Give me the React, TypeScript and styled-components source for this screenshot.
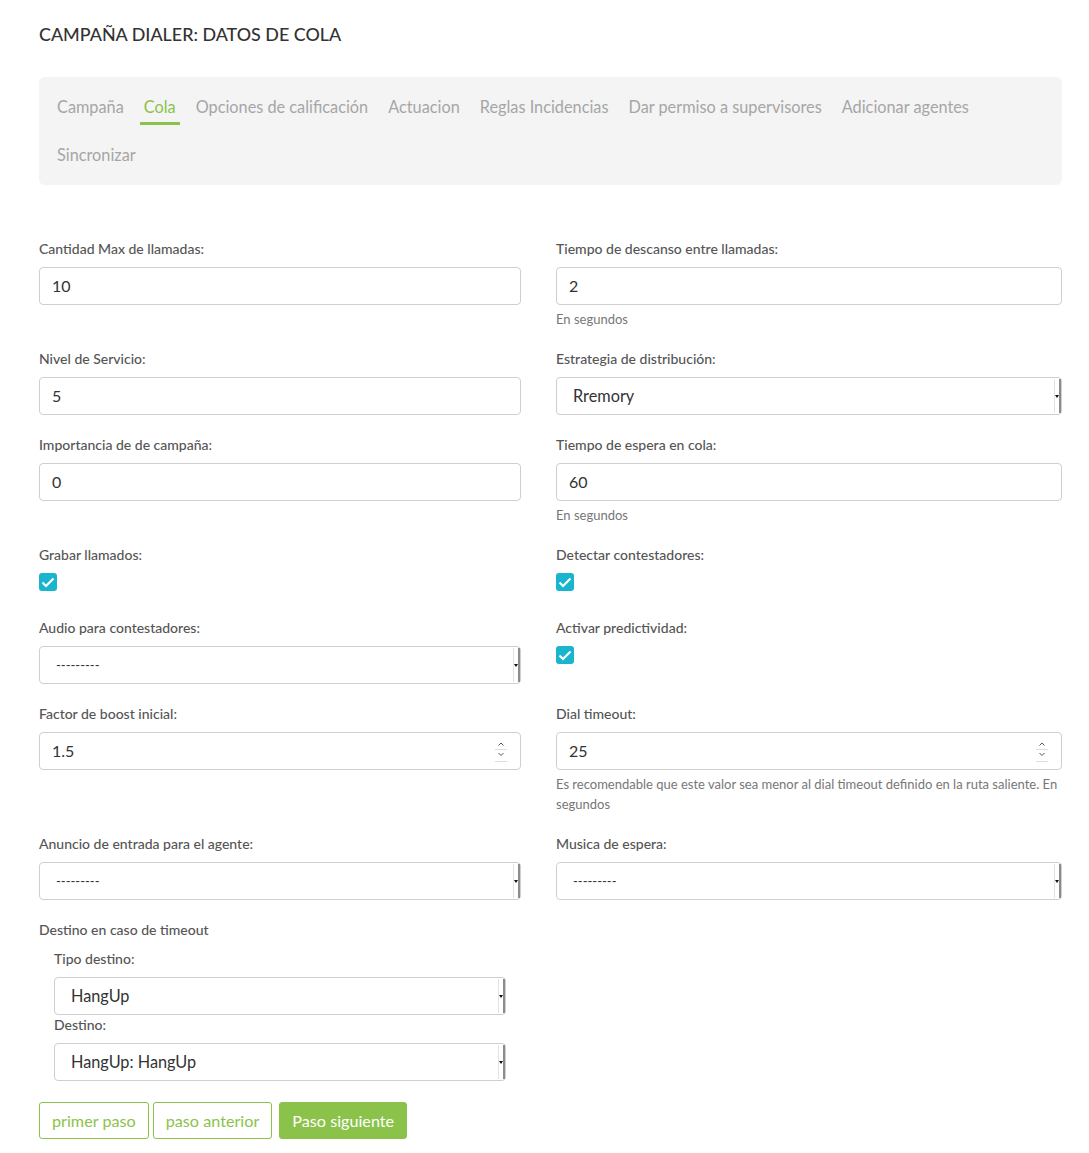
import React from 'react'
import styled, { createGlobalStyle } from 'styled-components'

const GlobalStyle = createGlobalStyle`
  body {
    margin: 0;
    background: #fff;
    font-family: Lato, 'Open Sans', sans-serif;
    color: #333;
  }
`

const Page = styled.div`
  padding: 21px 27px 20px 39px;
`

const Title = styled.h1`
  margin: 0;
  font-size: 17.9px;
  line-height: 26px;
  font-weight: 500;
  color: #333;
`

const TabPanel = styled.nav`
  margin-top: 30px;
  background: #f4f4f4;
  border-radius: 6px;
  padding: 6px 14px;
  display: flex;
  flex-wrap: wrap;
`

const Tab = styled.div<{ $active?: boolean }>`
  height: 48px;
  margin-right: 12px;
  padding: 0 4px;
  box-sizing: border-box;
  display: flex;
  flex-direction: column;
  align-items: center;
  font-size: 16.3px;
  color: ${(p) => (p.$active ? '#8bc34a' : '#a6a6a6')};

  span {
    display: block;
    padding: 12px 4px 3px;
    line-height: 24px;
    margin: 0 -4px;
    border-bottom: 3px solid ${(p) => (p.$active ? '#8bc34a' : 'transparent')};
  }
`

const Form = styled.div`
  margin-top: 54px;
  display: grid;
  grid-template-columns: 482px 506px;
  column-gap: 35px;
  row-gap: 20px;
  align-items: start;
`

const Field = styled.div``

const Label = styled.div`
  font-size: 14px;
  line-height: 20px;
  font-weight: 500;
  color: #555;
`

const Box = styled.div`
  margin-top: 8px;
  height: 38px;
  box-sizing: border-box;
  border: 1px solid #cfcfcf;
  border-radius: 4px;
  background: #fff;
  display: flex;
  align-items: center;
  padding-left: 12px;
  padding-right: 13px;
  font-size: 16px;
  color: #333;
`

const SelectBox = styled(Box)<{ $empty?: boolean }>`
  padding-left: 16px;
  padding-right: 0;
  font-size: ${(p) => (p.$empty ? '13px' : '16.3px')};
`

const Value = styled.span`
  flex: 1;
  margin-top: -1px;
`

const ArrowBox = styled.div`
  width: 7px;
  height: 34px;
  box-sizing: border-box;
  border-left: 1px solid #e2e2e2;
  border-right: 2px solid #8c8c8c;
  display: flex;
  align-items: center;
  justify-content: center;

  &::before {
    content: '';
    border-left: 2.5px solid transparent;
    border-right: 2.5px solid transparent;
    border-top: 3px solid #111;
  }
`

const Help = styled.div`
  margin-top: 4px;
  font-size: 13px;
  line-height: 20px;
  color: #777;
`

const CheckRow = styled.div`
  margin-top: 8px;
  height: 25px;
`

const Check = styled.span`
  display: flex;
  width: 18px;
  height: 18px;
  border-radius: 3px;
  background: #19b5cf;
  align-items: center;
  justify-content: center;
`

const SubGroup = styled.div`
  padding: 0 15px;
  margin-top: 9px;
`

const Actions = styled.div`
  margin-top: 21px;
  display: flex;
  gap: 4px;
`

const Button = styled.button<{ $primary?: boolean }>`
  height: 37px;
  padding: 0 12px;
  border-radius: 3px;
  border: 1px solid #8bc34a;
  background: ${(p) => (p.$primary ? '#8bc34a' : '#fff')};
  color: ${(p) => (p.$primary ? '#fff' : '#8bc34a')};
  font-family: inherit;
  font-size: 16.2px;
  margin-left: ${(p) => (p.$primary ? '3px' : '0')};
`

const tabs = [
  'Campaña',
  'Cola',
  'Opciones de calificación',
  'Actuacion',
  'Reglas Incidencias',
  'Dar permiso a supervisores',
  'Adicionar agentes',
  'Sincronizar',
]

const Spinner = () => (
  <svg width="12" height="26" viewBox="0 0 12 26" fill="none">
    <path d="M3.5 7.5 L6 5 L8.5 7.5" stroke="#555" strokeWidth="1" />
    <line x1="0" y1="11.5" x2="12" y2="11.5" stroke="#ddd" />
    <path d="M3.5 15 L6 17.5 L8.5 15" stroke="#555" strokeWidth="1" />
    <line x1="0" y1="23.5" x2="12" y2="23.5" stroke="#ddd" />
  </svg>
)

const CheckMark = () => (
  <svg width="14" height="11" viewBox="0 0 14 11">
    <path d="M1.5 5.5 L5 9 L12.5 1.5" stroke="#fff" strokeWidth="2.2" fill="none" />
  </svg>
)

const Input = ({ value, number }: { value: string; number?: boolean }) => (
  <Box>
    <Value>{value}</Value>
    {number && <Spinner />}
  </Box>
)

const Select = ({ value }: { value?: string }) => (
  <SelectBox $empty={!value}>
    <Value>{value || '---------'}</Value>
    <ArrowBox />
  </SelectBox>
)

const Checkbox = () => (
  <CheckRow>
    <Check>
      <CheckMark />
    </Check>
  </CheckRow>
)

export default function App() {
  return (
    <Page>
      <GlobalStyle />
      <Title>CAMPAÑA DIALER: DATOS DE COLA</Title>
      <TabPanel>
        {tabs.map((t) => (
          <Tab key={t} $active={t === 'Cola'}>
            <span>{t}</span>
          </Tab>
        ))}
      </TabPanel>

      <Form>
        <Field>
          <Label>Cantidad Max de llamadas:</Label>
          <Input value="10" />
        </Field>
        <Field>
          <Label>Tiempo de descanso entre llamadas:</Label>
          <Input value="2" />
          <Help>En segundos</Help>
        </Field>

        <Field>
          <Label>Nivel de Servicio:</Label>
          <Input value="5" />
        </Field>
        <Field>
          <Label>Estrategia de distribución:</Label>
          <Select value="Rremory" />
        </Field>

        <Field>
          <Label>Importancia de de campaña:</Label>
          <Input value="0" />
        </Field>
        <Field>
          <Label>Tiempo de espera en cola:</Label>
          <Input value="60" />
          <Help>En segundos</Help>
        </Field>

        <Field>
          <Label>Grabar llamados:</Label>
          <Checkbox />
        </Field>
        <Field>
          <Label>Detectar contestadores:</Label>
          <Checkbox />
        </Field>

        <Field>
          <Label>Audio para contestadores:</Label>
          <Select />
        </Field>
        <Field>
          <Label>Activar predictividad:</Label>
          <Checkbox />
        </Field>

        <Field>
          <Label>Factor de boost inicial:</Label>
          <Input value="1.5" number />
        </Field>
        <Field>
          <Label>Dial timeout:</Label>
          <Input value="25" number />
          <Help>
            Es recomendable que este valor sea menor al dial timeout definido en la ruta saliente. En
            segundos
          </Help>
        </Field>

        <Field>
          <Label>Anuncio de entrada para el agente:</Label>
          <Select />
        </Field>
        <Field>
          <Label>Musica de espera:</Label>
          <Select />
        </Field>

        <Field>
          <Label>Destino en caso de timeout</Label>
          <SubGroup>
            <Label>Tipo destino:</Label>
            <Select value="HangUp" />
            <Label>Destino:</Label>
            <Select value="HangUp: HangUp" />
          </SubGroup>
        </Field>
      </Form>

      <Actions>
        <Button>primer paso</Button>
        <Button>paso anterior</Button>
        <Button $primary>Paso siguiente</Button>
      </Actions>
    </Page>
  )
}
